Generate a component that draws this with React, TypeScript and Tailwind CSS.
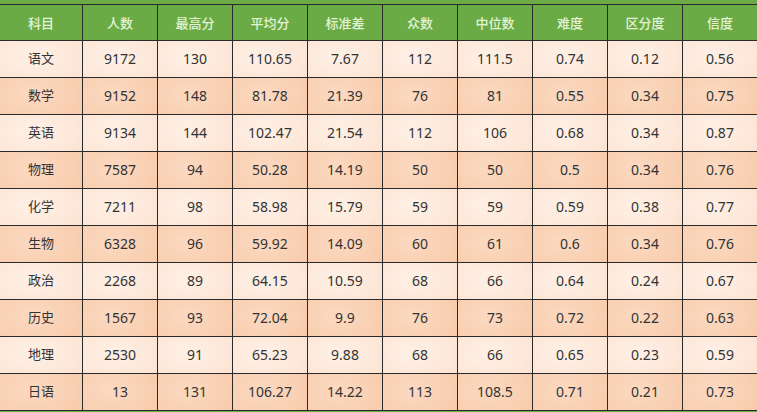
import React from "react";

const headers = ["科目", "人数", "最高分", "平均分", "标准差", "众数", "中位数", "难度", "区分度", "信度"];

const rows: string[][] = [
  ["语文", "9172", "130", "110.65", "7.67", "112", "111.5", "0.74", "0.12", "0.56"],
  ["数学", "9152", "148", "81.78", "21.39", "76", "81", "0.55", "0.34", "0.75"],
  ["英语", "9134", "144", "102.47", "21.54", "112", "106", "0.68", "0.34", "0.87"],
  ["物理", "7587", "94", "50.28", "14.19", "50", "50", "0.5", "0.34", "0.76"],
  ["化学", "7211", "98", "58.98", "15.79", "59", "59", "0.59", "0.38", "0.77"],
  ["生物", "6328", "96", "59.92", "14.09", "60", "61", "0.6", "0.34", "0.76"],
  ["政治", "2268", "89", "64.15", "10.59", "68", "66", "0.64", "0.24", "0.67"],
  ["历史", "1567", "93", "72.04", "9.9", "76", "73", "0.72", "0.22", "0.63"],
  ["地理", "2530", "91", "65.23", "9.88", "68", "66", "0.65", "0.23", "0.59"],
  ["日语", "13", "131", "106.27", "14.22", "113", "108.5", "0.71", "0.21", "0.73"],
];

const light =
  "bg-[radial-gradient(ellipse_90%_120%_at_40%_45%,#fef0e6_0%,#fde7d8_60%,#fbdecb_100%)]";
const dark =
  "bg-[radial-gradient(ellipse_90%_120%_at_40%_45%,#fbd9c1_0%,#f9cfb1_60%,#f7c5a2_100%)]";

export default function App() {
  return (
    <div className="w-[757px] h-[412px] overflow-hidden bg-[#6aab46] pt-[4px] font-['Noto_Sans','Noto_Sans_CJK_SC',sans-serif]">
      <div className="grid grid-cols-[82px_repeat(8,74px)_1fr] grid-rows-[35px_repeat(10,36px)] gap-px bg-[#2a2a2a] border-y border-[#2a2a2a]">
        {headers.map((h) => (
          <div
            key={h}
            className="flex items-center justify-center bg-[#6aab46] text-[13px] font-medium text-[#e4f3d4] font-['Noto_Sans_CJK_SC',sans-serif]"
          >
            {h}
          </div>
        ))}
        {rows.map((r, i) =>
          r.map((c, j) => (
            <div
              key={`${i}-${j}`}
              className={`flex items-center justify-center text-[#333333] ${
                i % 2 === 0 ? light : dark
              } ${
                j === 0
                  ? "text-[13px] font-['Noto_Sans_CJK_SC',sans-serif]"
                  : "text-[14px]"
              }`}
            >
              <span className="-mt-[2px]">{c}</span>
            </div>
          ))
        )}
      </div>
    </div>
  );
}
